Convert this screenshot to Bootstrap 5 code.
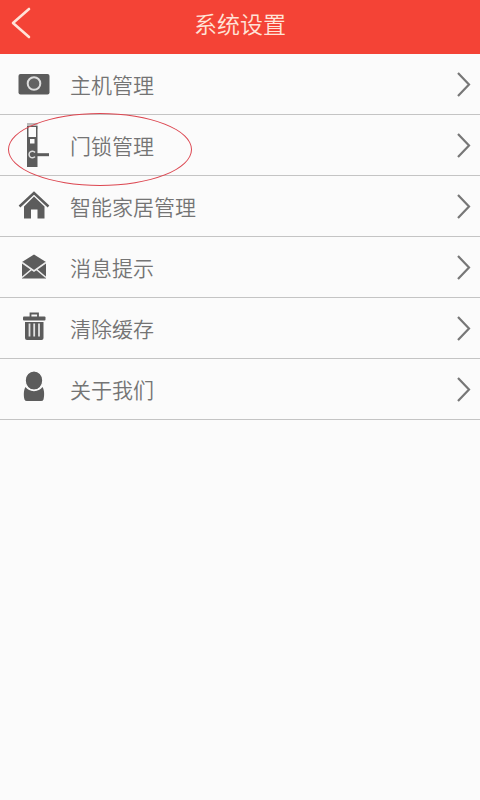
<!DOCTYPE html>
<html lang="zh-CN">
<head>
<meta charset="utf-8">
<meta name="viewport" content="width=device-width, initial-scale=1">
<title>系统设置</title>
<link href="https://cdn.jsdelivr.net/npm/bootstrap@5.3.0/dist/css/bootstrap.min.css" rel="stylesheet">
<style>
  body { background: #fbfbfb; font-family: "Noto Sans CJK SC", sans-serif; }
  .top-bar { background: #f44336; min-height: 54px; padding-bottom: 8px; color: #ffe3d8; }
  .top-bar h1 { font-size: 23px; line-height: 32px; font-weight: 350; }
  .back-btn { left: 0; top: 0; width: 48px; height: 46px; padding: 0 0 0 10px; border: 0; }
  .setting-row { min-height: 61px; padding: 0 8px 0 16px; border-bottom: 1px solid #c4c4c4; color: #747474; font-size: 21px; line-height: 30px; font-weight: 350; }
  .setting-row:hover { color: #555; }
  .setting-label { padding-bottom: 1px; }
  .setting-icon { width: 36px; height: 48px; margin-right: 18px; fill: #5c5c5c; }
  .ring { left: 8px; top: -2px; width: 184px; height: 73px; border: 1px solid #dc4650; border-radius: 50%; z-index: 2; pointer-events: none; }
</style>
</head>
<body>
<header class="top-bar position-relative d-flex align-items-center justify-content-center">
  <button type="button" class="btn back-btn position-absolute d-flex align-items-center" aria-label="返回">
    <svg width="24" height="32" viewBox="0 0 24 32" fill="none" stroke="#ffe3d8" stroke-width="2.6" stroke-linecap="round" stroke-linejoin="round"><path d="M19 2 3 16 19 30"/></svg>
  </button>
  <h1 class="m-0">系统设置</h1>
</header>
<nav aria-label="系统设置">
  <a href="#host" class="setting-row d-flex align-items-center text-decoration-none">
    <svg class="setting-icon" viewBox="0 0 36 48" aria-hidden="true"><rect x="2.5" y="14" width="31" height="20.5" rx="2"/><circle cx="18" cy="23.5" r="6.3" fill="#626262" stroke="#ddd" stroke-width="2"/></svg>
    <span class="setting-label flex-grow-1">主机管理</span>
    <svg width="16" height="26" viewBox="0 0 16 26" fill="none" stroke="#777" stroke-width="2.2" aria-hidden="true"><path d="M2 2 13 13.5 2 25"/></svg>
  </a>
  <a href="#lock" class="setting-row position-relative d-flex align-items-center text-decoration-none">
    <span class="ring position-absolute"></span>
    <svg class="setting-icon" viewBox="0 0 36 48" aria-hidden="true"><rect x="11" y="2" width="10.5" height="6" fill="#bbb"/><path d="M11 5h10.5v41H11z"/><path fill="#fbfbfb" d="M12.5 6h7.500v10h-7.500zM14 18h4.500v4.500H14z"/><path d="M19 31.500A3.300 3.300 0 1 0 19 35.500" fill="none" stroke="#ddd" stroke-width="1.500"/><path d="M18 32.200h15v3H18z"/></svg>
    <span class="setting-label flex-grow-1">门锁管理</span>
    <svg width="16" height="26" viewBox="0 0 16 26" fill="none" stroke="#777" stroke-width="2.2" aria-hidden="true"><path d="M2 2 13 13.5 2 25"/></svg>
  </a>
  <a href="#home" class="setting-row d-flex align-items-center text-decoration-none">
    <svg class="setting-icon" viewBox="0 0 36 48" aria-hidden="true"><path d="M3.500 24.500 18 11 32.500 24.500" fill="none" stroke="#5c5c5c" stroke-width="2.400"/><path d="M18 14.500 28.500 24.500V36.500H21.500V27.500H15V36.500H8V24.500z"/></svg>
    <span class="setting-label flex-grow-1">智能家居管理</span>
    <svg width="16" height="26" viewBox="0 0 16 26" fill="none" stroke="#777" stroke-width="2.2" aria-hidden="true"><path d="M2 2 13 13.5 2 25"/></svg>
  </a>
  <a href="#messages" class="setting-row d-flex align-items-center text-decoration-none">
    <svg class="setting-icon" viewBox="0 0 36 48" aria-hidden="true"><path d="M18 11.500 30 19V35.500H6V19z"/><path d="M6 19.500 18 28 30 19.500M6 34.500 15.500 26.500M30 34.500 20.500 26.500" fill="none" stroke="#ececec" stroke-width="1.600"/></svg>
    <span class="setting-label flex-grow-1">消息提示</span>
    <svg width="16" height="26" viewBox="0 0 16 26" fill="none" stroke="#777" stroke-width="2.2" aria-hidden="true"><path d="M2 2 13 13.5 2 25"/></svg>
  </a>
  <a href="#cache" class="setting-row d-flex align-items-center text-decoration-none">
    <svg class="setting-icon" viewBox="0 0 36 48" aria-hidden="true"><path d="M14.500 13V9.500h7.500V13" fill="none" stroke="#5c5c5c" stroke-width="1.800"/><rect x="7" y="12.500" width="22.500" height="4" rx="1"/><path d="M9 18h18.500V34a2 2 0 0 1-2 2H11a2 2 0 0 1-2-2z"/><path d="M13.500 19.500v13M18.200 19.500v13M23 19.500v13" stroke="#e2e2e2" stroke-width="1.800"/></svg>
    <span class="setting-label flex-grow-1">清除缓存</span>
    <svg width="16" height="26" viewBox="0 0 16 26" fill="none" stroke="#777" stroke-width="2.2" aria-hidden="true"><path d="M2 2 13 13.5 2 25"/></svg>
  </a>
  <a href="#about" class="setting-row d-flex align-items-center text-decoration-none">
    <svg class="setting-icon" viewBox="0 0 36 48" aria-hidden="true"><path d="M9.500 22C13 27.500 23 27.500 26.500 22 28.500 25 28.500 31 27.500 34.500Q27 36 25 36H11Q9 36 8.500 34.500C7.500 31 7.500 25 9.500 22z"/><ellipse cx="18" cy="15.500" rx="8.800" ry="9.600" stroke="#fbfbfb" stroke-width="1.200"/></svg>
    <span class="setting-label flex-grow-1">关于我们</span>
    <svg width="16" height="26" viewBox="0 0 16 26" fill="none" stroke="#777" stroke-width="2.2" aria-hidden="true"><path d="M2 2 13 13.5 2 25"/></svg>
  </a>
</nav>
<script src="https://cdn.jsdelivr.net/npm/bootstrap@5.3.0/dist/js/bootstrap.bundle.min.js"></script>
</body>
</html>
